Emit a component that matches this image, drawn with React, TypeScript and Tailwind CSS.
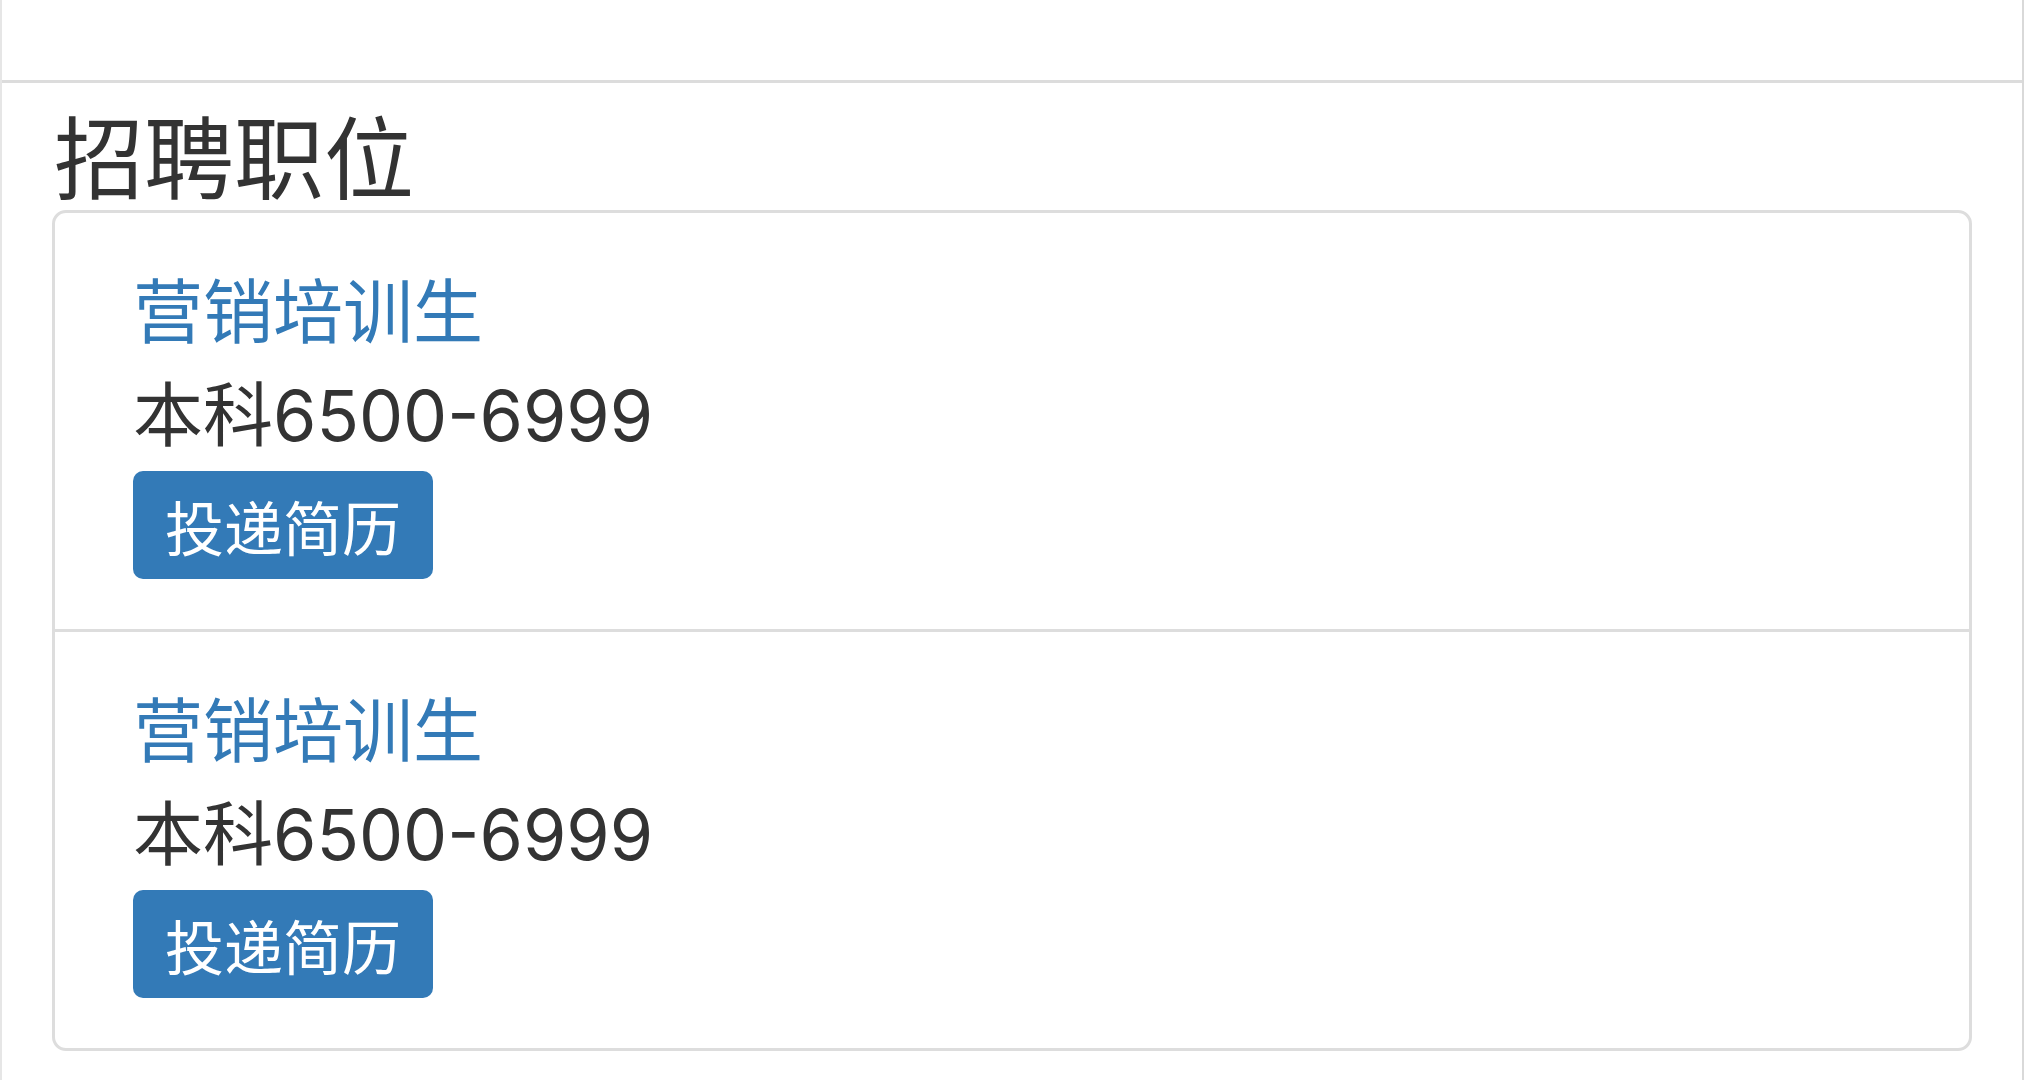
import React from "react";

const jobs = [
  { title: "营销培训生", salary: "本科6500-6999" },
  { title: "营销培训生", salary: "本科6500-6999" },
];

export default function App() {
  return (
    <div
      className="flex h-[1080px] w-[2024px] overflow-hidden bg-white text-[#333]"
      style={{ fontFamily: '"Noto Sans CJK SC", "Noto Sans", sans-serif' }}
    >
      <div className="flex h-full flex-1 flex-col border-l-2 border-[#e6e6e6]">
        <div className="h-[83px] border-b-[3px] border-[#dcdcdc]" />
        <div className="flex flex-col px-[50px]">
          <h1 className="mt-[20px] pl-[2px] text-[90px] font-normal leading-[100px] text-[#333]">
            招聘职位
          </h1>
          <div className="mt-[7px] w-[1920px] rounded-[14px] border-[3px] border-[#dddddd]">
            {jobs.map((job, i) => (
              <div
                key={i}
                className={
                  "flex flex-col items-start pl-[78px] pt-[55px] pb-[50px] " +
                  (i > 0 ? "border-t-[3px] border-[#dddddd]" : "")
                }
              >
                <div className="text-[70px] leading-[80px] text-[#337ab7]">{job.title}</div>
                <div
                  className="mt-[28px] text-[70px] leading-[80px] text-[#333]"
                  style={{ fontFamily: 'Inter, "Noto Sans CJK SC", sans-serif' }}
                >
                  {job.salary}
                </div>
                <button className="mt-[15px] flex h-[108px] w-[300px] items-center justify-center rounded-[10px] bg-[#337ab7] text-[59px] leading-none text-white">
                  投递简历
                </button>
              </div>
            ))}
          </div>
        </div>
      </div>
      <div className="h-full w-[18px] bg-[#d9d9d9]" />
    </div>
  );
}
